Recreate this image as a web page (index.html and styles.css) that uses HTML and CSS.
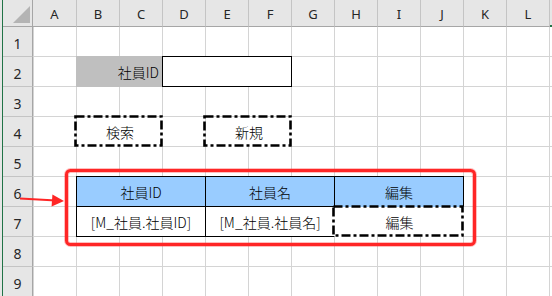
FILE: index.html
```html
<!DOCTYPE html>
<html lang="ja">
<head>
<meta charset="utf-8">
<title>社員検索</title>
<link rel="stylesheet" href="styles.css">
</head>
<body>
<div class="sheet">
  <div class="corner"><svg class="corner-mark" width="29" height="26" viewBox="0 0 29 26"><polygon points="27,6 27,23 10,23"/></svg></div>
  <div class="ch">A</div>
  <div class="ch">B</div>
  <div class="ch">C</div>
  <div class="ch">D</div>
  <div class="ch">E</div>
  <div class="ch">F</div>
  <div class="ch">G</div>
  <div class="ch">H</div>
  <div class="ch">I</div>
  <div class="ch">J</div>
  <div class="ch">K</div>
  <div class="ch">L</div>
  <div class="ch edge"></div>

  <div class="rh">1</div>
  <div class="rh">2</div>
  <div class="rh">3</div>
  <div class="rh">4</div>
  <div class="rh">5</div>
  <div class="rh">6</div>
  <div class="rh">7</div>
  <div class="rh">8</div>
  <div class="rh">9</div>

  <div class="cell label-id">社員ID</div>
  <div class="cell input-id"></div>

  <div class="cell btn search">検索<svg class="dash"><rect/></svg></div>
  <div class="cell btn new">新規<svg class="dash"><rect/></svg></div>

  <div class="cell t t-head c-id">社員ID</div>
  <div class="cell t t-head c-name">社員名</div>
  <div class="cell t t-head c-edit">編集</div>
  <div class="cell t t-body c-id">[M_社員.社員ID]</div>
  <div class="cell t t-body c-name">[M_社員.社員名]</div>
  <div class="cell t t-body c-edit">編集<svg class="dash"><rect/></svg></div>
</div>

<svg class="annot" width="552" height="296" viewBox="0 0 552 296">
  <rect class="glow" x="66.5" y="170.5" width="408" height="74" rx="4"/>
  <rect class="frame" x="66.5" y="170.5" width="408" height="74" rx="4"/>
  <line class="arrow-line" x1="20" y1="198.4" x2="56" y2="200.6"/>
  <polygon class="arrow-head" points="64,201 52.4,194.4 51.6,206.6"/>
</svg>
</body>
</html>
```
FILE: styles.css
```css
* { box-sizing: border-box; }

html, body { margin: 0; }

body {
  width: 552px;
  height: 296px;
  overflow: hidden;
  position: relative;
  padding-left: 2px;
  background: #e6e6e6;
  font-family: "Noto Sans CJK JP", "Noto Sans", sans-serif;
}

.sheet {
  display: grid;
  grid-template-columns: 30px 44px repeat(11, 43px) 1fr;
  grid-template-rows: 27px repeat(9, 30px);
  border-left: 1px solid #217346;
  background-color: #fff;
  background-image:
    linear-gradient(to right, #d4d4d4 1px, transparent 1px),
    linear-gradient(to bottom, #d4d4d4 1px, transparent 1px);
  background-size: 43px 100%, 100% 30px;
  background-position: 73px 0, 0 26px;
}

.corner {
  background: #e6e6e6;
  border-right: 1px solid #a6a6a6;
  border-bottom: 1px solid #a6a6a6;
}
.corner-mark { display: block; }
.corner-mark polygon { fill: #b4b4b4; }

.ch {
  display: flex;
  align-items: center;
  justify-content: center;
  padding-top: 2px;
  background: #e6e6e6;
  border-right: 1px solid #c4c4c4;
  border-bottom: 1px solid #a6a6a6;
  font: 13px "Noto Sans", sans-serif;
  color: #262626;
}
.ch.edge {
  border-right: none;
  border-bottom: 2px solid #217346;
}

.rh {
  grid-column: 1;
  display: flex;
  align-items: center;
  justify-content: center;
  padding-top: 3px;
  background: #e6e6e6;
  border-right: 1px solid #a6a6a6;
  border-bottom: 1px solid #c4c4c4;
  font: 14px "Noto Sans", sans-serif;
  color: #262626;
}

.cell {
  display: flex;
  align-items: center;
  justify-content: center;
  font-size: 14px;
  font-weight: 300;
  line-height: 1;
  color: #000;
}

.label-id {
  grid-row: 3;
  grid-column: 3 / 5;
  margin: -1px 0 0 -1px;
  background: #bfbfbf;
  justify-content: flex-end;
  padding-right: 4px;
}

.input-id {
  grid-row: 3;
  grid-column: 5 / 8;
  margin: -1px 0 0 -1px;
  border: 1px solid #000;
  background: #fff;
}

.btn {
  position: relative;
  background: #fff;
}
.search { grid-row: 5; grid-column: 3 / 5; }
.new { grid-row: 5; grid-column: 6 / 8; }

.dash {
  position: absolute;
  top: -2px;
  left: -3px;
  width: calc(100% + 3px);
  height: calc(100% + 2px);
  overflow: visible;
}
.dash rect {
  x: 1.5px;
  y: 1.5px;
  width: calc(100% - 3px);
  height: calc(100% - 3px);
  fill: none;
  stroke: #000;
  stroke-width: 2.6;
  stroke-dasharray: 9 3 3 3;
}

.t {
  border-right: 1px solid #000;
  border-bottom: 1px solid #000;
}
.t-head {
  grid-row: 7;
  margin-top: -1px;
  border-top: 1px solid #000;
  background: #99ccff;
}
.t-body {
  grid-row: 8;
  background: #fff;
}
.c-id {
  grid-column: 3 / 6;
  margin-left: -1px;
  border-left: 1px solid #000;
}
.c-name { grid-column: 6 / 9; }
.c-edit { grid-column: 9 / 12; }

.t-head.c-edit { border-bottom-color: transparent; }
.t-body.c-name { border-right-color: #fff; }
.t-body.c-edit {
  position: relative;
  border: none;
}

.annot {
  position: absolute;
  top: 0;
  left: 0;
  pointer-events: none;
}
.annot .glow {
  fill: none;
  stroke: rgba(255, 40, 40, 0.3);
  stroke-width: 5;
}
.annot .frame {
  fill: none;
  stroke: #ff2626;
  stroke-width: 3;
}
.arrow-line {
  stroke: #ff2626;
  stroke-width: 2;
}
.arrow-head { fill: #ff2626; }
```
